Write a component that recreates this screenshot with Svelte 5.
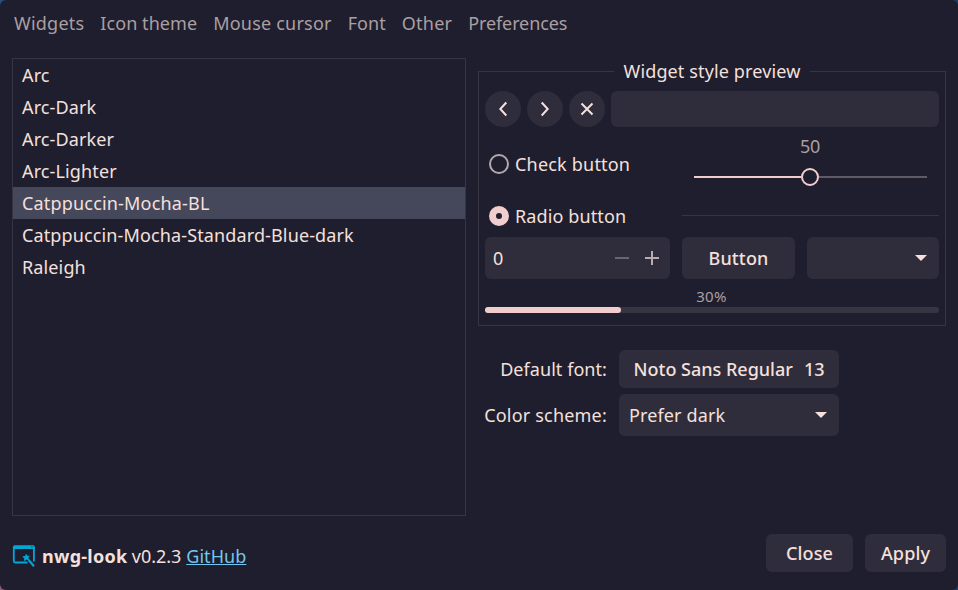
<script>
  const tabs = ['Widgets', 'Icon theme', 'Mouse cursor', 'Font', 'Other', 'Preferences'];
  const themes = [
    'Arc',
    'Arc-Dark',
    'Arc-Darker',
    'Arc-Lighter',
    'Catppuccin-Mocha-BL',
    'Catppuccin-Mocha-Standard-Blue-dark',
    'Raleigh'
  ];
  let selected = $state('Catppuccin-Mocha-BL');
  let checked = $state(false);
  let progress = $state(30);
</script>

<div class="window">
  <nav>
    {#each tabs as tab}<span>{tab}</span>{/each}
  </nav>

  <main>
    <ul class="themes">
      {#each themes as theme}
        <li class:selected={theme === selected} onclick={() => (selected = theme)} role="presentation">{theme}</li>
      {/each}
    </ul>

    <section class="side">
      <fieldset>
        <legend>Widget style preview</legend>
        <div class="toolbar">
          <button class="round" aria-label="Back">
            <svg width="36" height="36"><path d="M21.300 11.500 15.300 18 21.300 24.500" /></svg>
          </button>
          <button class="round" aria-label="Forward">
            <svg width="36" height="36"><path d="M14.700 11.500 20.700 18 14.700 24.500" /></svg>
          </button>
          <button class="round" aria-label="Clear">
            <svg width="36" height="36"><path d="M12.500 12.500 23.500 23.500M23.500 12.500 12.500 23.500" /></svg>
          </button>
          <div class="entry"></div>
        </div>

        <div class="cols sliderrow">
          <div class="option" onclick={() => (checked = !checked)} role="presentation">
            <i class="mark" class:on={checked}></i>Check button
          </div>
          <div class="scale">
            <span>50</span>
            <div class="trough"><div class="fill"></div><i class="knob"></i><div class="rest"></div></div>
          </div>
        </div>

        <div class="cols radiorow">
          <div class="option radio"><i class="mark on"></i>Radio button</div>
          <div class="separator"></div>
        </div>

        <div class="controls">
          <div class="spin">
            <span>0</span>
            <svg width="48" height="42">
              <path class="minus" d="M0 21H14" /><path class="plus" d="M30 21H44M37 14V28" />
            </svg>
          </div>
          <button class="plain">Button</button>
          <div class="combo short"><span></span><svg width="12" height="6"><path d="M0 0H12L6 6Z" /></svg></div>
        </div>

        <div class="percent">{progress}%</div>
        <div class="progress"><div style:width="{progress}%"></div></div>
      </fieldset>

      <div class="settings">
        <label for="font">Default font:</label>
        <button id="font" class="fontbtn"><span>Noto Sans Regular</span><span>13</span></button>
        <span class="label">Color scheme:</span>
        <div class="combo"><span>Prefer dark</span><svg width="12" height="6"><path d="M0 0H12L6 6Z" /></svg></div>
      </div>
    </section>
  </main>

  <footer>
    <svg class="logo" width="24" height="24" viewBox="0 0 24 24">
      <path d="M15.500 18.500H3.200A1.400 1.400 0 0 1 1.800 17.100V3M21.900 3V17.500" fill="none" stroke="#00a8d8" stroke-width="1.800" />
      <path d="M2.500 1.200H21.200A1.500 1.500 0 0 1 22.700 2.700V5H1V2.700A1.500 1.500 0 0 1 2.500 1.200Z" fill="#00a8d8" />
      <path d="M19.200 3.200H20.600" stroke="#1e1e2e" stroke-opacity=".7" stroke-width="1.300" />
      <path d="M14.200 10.400 15 12.300 17.300 12.100 16 13.800 16.700 16 14.400 15.200 12.500 16.600 12.600 14.200 10.900 12.800 13.200 12.400Z" fill="#00a8d8" stroke="#00a8d8" stroke-width=".8" />
      <path d="M16.600 16 22 22.200" stroke="#00a8d8" stroke-width="2.200" />
    </svg>
    <b>nwg-look</b><span class="version">v0.2.3</span><span class="link">GitHub</span>
    <div class="actions">
      <button class="close">Close</button>
      <button class="apply">Apply</button>
    </div>
  </footer>
</div>

<style>
  :global(body) {
    margin: 0;
    background: radial-gradient(circle at 0 590px, #8a5a78 0 8px, transparent 9px), linear-gradient(100deg, #28507c, #203c60);
  }
  .window {
    box-sizing: border-box;
    width: 958px;
    height: 590px;
    padding: 0 12px;
    border-radius: 6px;
    overflow: hidden;
    background: #1e1e2e;
    color: #f5e0dc;
    font: 18px/24px 'Noto Sans', sans-serif;
    letter-spacing: 0.13px;
    white-space: nowrap;
    display: flex;
    flex-direction: column;
  }
  nav {
    height: 58px;
    box-sizing: border-box;
    padding: 11px 2px 0;
    display: flex;
    gap: 16px;
    color: #ab9fa2;
    letter-spacing: 0.22px;
  }
  nav span:nth-child(2),
  nav span:nth-child(4) {
    letter-spacing: 0.06px;
  }
  nav span:last-child {
    letter-spacing: -0.1px;
  }
  main {
    height: 458px;
    display: flex;
    gap: 12px;
  }
  .themes {
    box-sizing: border-box;
    width: 454px;
    margin: 0;
    padding: 0;
    list-style: none;
    border: 1px solid #383543;
  }
  .themes li {
    height: 32px;
    line-height: 32px;
    padding-left: 9px;
  }
  .themes .selected {
    background: #45475a;
    letter-spacing: 0.18px;
  }
  .side {
    width: 468px;
  }
  fieldset {
    box-sizing: border-box;
    height: 268px;
    margin: 0;
    min-width: 0;
    padding: 6px 6px 0;
    border: 1px solid #383543;
  }
  legend {
    height: 27px;
    line-height: 27px;
    margin: 0 auto;
    padding: 0 10px;
  }
  button {
    border: 0;
    margin: 0;
    padding: 0;
    font: inherit;
    font-weight: 500;
    letter-spacing: inherit;
    color: inherit;
    background: #2f2d3c;
    border-radius: 6px;
  }
  .toolbar {
    display: flex;
    gap: 6px;
    height: 36px;
  }
  .round {
    width: 36px;
    height: 36px;
    border-radius: 50%;
  }
  .round svg {
    display: block;
    fill: none;
    stroke: #f5e0dc;
    stroke-width: 2;
  }
  .entry {
    flex: 1;
    background: #2f2d3c;
    border-radius: 6px;
  }
  .cols {
    display: grid;
    grid-template-columns: 185px 257px;
    column-gap: 12px;
    align-items: center;
  }
  .sliderrow {
    height: 62px;
    margin-top: 6px;
  }
  .radiorow {
    height: 42px;
  }
  .option {
    display: flex;
    align-items: center;
    gap: 6px;
    padding-left: 4px;
    letter-spacing: 0.2px;
  }
  .radio {
    letter-spacing: 0.12px;
  }
  .mark {
    box-sizing: border-box;
    width: 20px;
    height: 20px;
    border: 2px solid #b5a8ab;
    border-radius: 50%;
  }
  .mark.on {
    border: 7px solid #f2cdcd;
  }
  .scale {
    display: flex;
    flex-direction: column;
    align-items: center;
    padding: 0 12px;
    color: #ab9fa2;
    letter-spacing: -0.2px;
  }
  .scale span {
    margin-right: 1px;
  }
  .trough {
    width: 100%;
    height: 18px;
    margin: 10px 0 8px;
    display: flex;
    align-items: center;
  }
  .fill,
  .rest {
    flex: 0 0 107px;
    height: 2px;
    background: #f2cdcd;
  }
  .rest {
    flex: 1;
    background: #5f5a65;
  }
  .knob {
    box-sizing: border-box;
    width: 18px;
    height: 18px;
    border: 2px solid #f2cdcd;
    border-radius: 50%;
  }
  .separator {
    height: 1px;
    margin-bottom: 1px;
    background: #383543;
  }
  .controls {
    display: flex;
    gap: 12px;
    height: 42px;
  }
  .spin {
    box-sizing: border-box;
    width: 185px;
    padding: 0 7px 0 8px;
    display: flex;
    align-items: center;
    justify-content: space-between;
    background: #2f2d3c;
    border-radius: 6px;
  }
  .spin path {
    stroke: #b9abae;
    stroke-width: 2;
  }
  .spin .minus {
    stroke: #6b646e;
  }
  .plain {
    width: 113px;
  }
  .combo {
    box-sizing: border-box;
    width: 220px;
    height: 42px;
    padding: 0 12px 0 10px;
    display: flex;
    align-items: center;
    justify-content: space-between;
    background: #2f2d3c;
    border-radius: 6px;
  }
  .combo.short {
    width: 132px;
  }
  .combo path {
    fill: #f5e0dc;
  }
  .percent {
    height: 21px;
    margin: 7px 0 0;
    padding-right: 1px;
    line-height: 20px;
    text-align: center;
    font-size: 15px;
    letter-spacing: 0.3px;
    color: #ab9fa2;
  }
  .progress {
    height: 6px;
    border-radius: 3px;
    background: #383543;
  }
  .progress div {
    height: 6px;
    border-radius: 3px;
    background: #f2cdcd;
  }
  .settings {
    margin-top: 24px;
    display: grid;
    grid-template-columns: 129px 220px;
    column-gap: 12px;
    row-gap: 6px;
    align-items: center;
    text-align: right;
  }
  .settings label {
    letter-spacing: 0.06px;
  }
  .settings .label {
    letter-spacing: 0.2px;
  }
  .fontbtn {
    height: 38px;
    display: flex;
    align-items: center;
    justify-content: center;
    gap: 11px;
    letter-spacing: 0;
  }
  footer {
    flex: 1;
    display: flex;
    align-items: center;
    padding-top: 6px;
  }
  .logo {
    margin-right: 6px;
  }
  b {
    letter-spacing: 0.26px;
  }
  .version {
    margin: 0 5px 0 4.5px;
    letter-spacing: -0.05px;
  }
  .link {
    color: #74c7ec;
    text-decoration: underline;
    letter-spacing: 0.05px;
  }
  .actions {
    margin: 0 0 6px auto;
    display: flex;
    gap: 12px;
  }
  .actions button {
    height: 38px;
  }
  .close {
    width: 87px;
  }
  .apply {
    width: 81px;
  }
</style>
